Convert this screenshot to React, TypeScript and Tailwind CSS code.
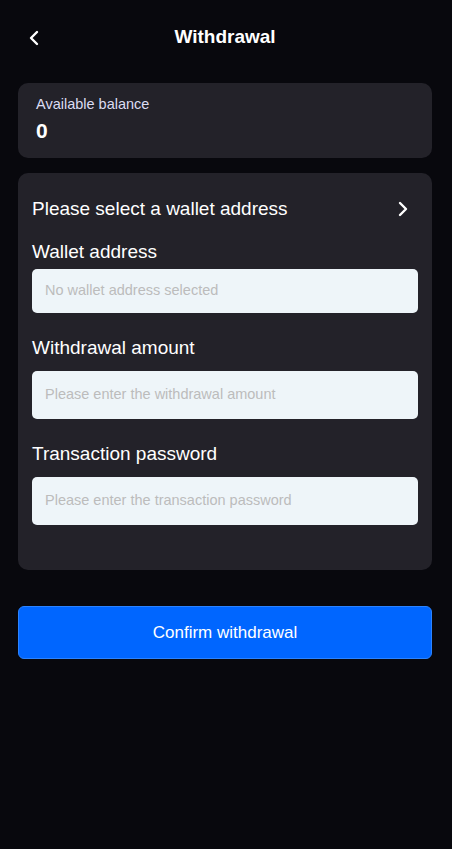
import React from "react";

function Chevron({ dir }: { dir: "left" | "right" }) {
  return (
    <svg width="12" height="16" viewBox="0 0 12 16" fill="none">
      <path
        d={dir === "left" ? "M9 2L3 8l6 6" : "M3 2l6 6-6 6"}
        stroke="white"
        strokeWidth="2.4"
        strokeLinecap="round"
        strokeLinejoin="round"
      />
    </svg>
  );
}

function Field({ label, placeholder, h, gap }: { label: string; placeholder: string; h: string; gap: string }) {
  return (
    <div className="flex flex-col">
      <div className="text-[19px] leading-[26px] text-white">{label}</div>
      <div className={`flex items-center rounded-[5px] bg-[#eef5f9] px-[13px] ${gap} ${h}`}>
        <span className="text-[14.5px] text-[#bcbcbc]">{placeholder}</span>
      </div>
    </div>
  );
}

export default function App() {
  return (
    <div className="min-h-[849px] w-full bg-[#08080d]">
      <div
        className="w-[450px] px-[18px] text-white"
        style={{ fontFamily: '"Liberation Sans", Arial, sans-serif' }}
      >
        {/* Header */}
        <div className="relative flex h-[75px] items-center justify-center">
          <button className="absolute left-[10px] top-[30px]">
            <Chevron dir="left" />
          </button>
          <span className="text-[19px] font-bold">Withdrawal</span>
        </div>

        {/* Balance */}
        <div className="mt-[8px] flex h-[75px] flex-col rounded-[10px] bg-[#232229] px-[18px] pt-[12px]">
          <span className="text-[14.5px] leading-[18px] text-[#dcdcf2]">Available balance</span>
          <span className="mt-[5px] text-[21px] font-bold leading-[26px]">0</span>
        </div>

        {/* Form */}
        <div className="mt-[15px] flex h-[397px] flex-col rounded-[10px] bg-[#232229] px-[14px] pt-[23px]">
          <div className="flex items-center justify-between pr-[9px]">
            <span className="text-[19px] leading-[26px]">Please select a wallet address</span>
            <Chevron dir="right" />
          </div>
          <div className="mt-[17px]">
            <Field label="Wallet address" placeholder="No wallet address selected" h="h-[44px]" gap="mt-[4px]" />
          </div>
          <div className="mt-[22px]">
            <Field label="Withdrawal amount" placeholder="Please enter the withdrawal amount" h="h-[48px]" gap="mt-[10px]" />
          </div>
          <div className="mt-[22px]">
            <Field label="Transaction password" placeholder="Please enter the transaction password" h="h-[48px]" gap="mt-[10px]" />
          </div>
        </div>

        <button className="mt-[36px] flex h-[53px] w-full items-center justify-center rounded-[6px] border border-[#2b83ff] bg-[#0066ff] text-[17px] text-white">
          Confirm withdrawal
        </button>
      </div>
    </div>
  );
}
